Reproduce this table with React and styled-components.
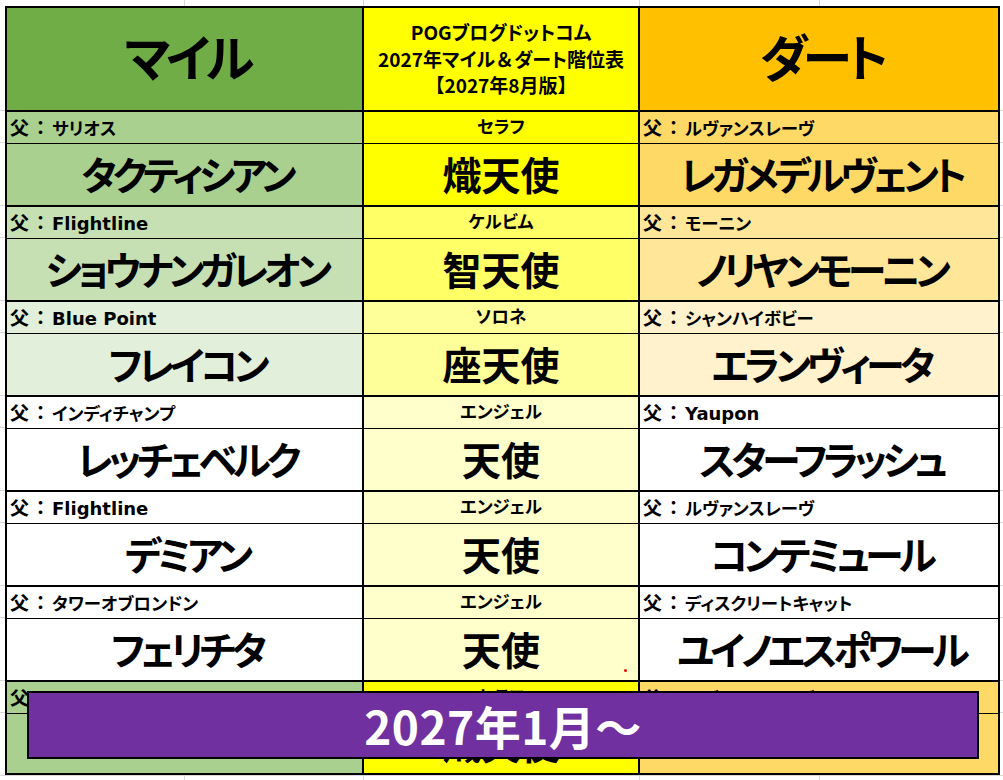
import React from "react";
import styled, { createGlobalStyle } from "styled-components";

const grid = "#d9d9d9";
const vLines = [184, 363, 639, 819];
const hLines = [110, 142, 205, 237, 300, 332, 395, 427, 490, 522, 585, 617, 680, 712, 775];
const bgImages = [
  ...vLines.map(() => `linear-gradient(${grid},${grid})`),
  ...hLines.map(() => `linear-gradient(${grid},${grid})`),
].join(",");
const bgPos = [
  ...vLines.map((x) => `${x}px 0`),
  ...hLines.map((y) => `0 ${y}px`),
].join(",");
const bgSize = [
  ...vLines.map(() => `1px 100%`),
  ...hLines.map(() => `100% 1px`),
].join(",");

const Global = createGlobalStyle`
  html, body { margin: 0; padding: 0; }
  body {
    width: 1003px;
    height: 780px;
    overflow: hidden;
    background-color: #fff;
    background-image: ${bgImages};
    background-position: ${bgPos};
    background-size: ${bgSize};
    background-repeat: no-repeat;
    font-family: "Noto Sans CJK JP", "Noto Sans", sans-serif;
    color: #000;
  }
`;

const Page = styled.div`
  padding: 6px 0 0 5px;
`;

const Sheet = styled.div`
  position: relative;
  width: 995px;
  box-sizing: border-box;
  border: 2px solid #000;
  display: grid;
  grid-template-columns: 357px 276px 358px;
  background: #fff;
`;

const Cell = styled.div`
  box-sizing: border-box;
  background: ${(p) => p.$bg};
  border-right: ${(p) => (p.$last ? "none" : "2px solid #000")};
  border-bottom: ${(p) => (p.$bottom === 0 ? "none" : `${p.$bottom}px solid #000`)};
  height: ${(p) => p.$h}px;
  display: flex;
  align-items: center;
  justify-content: ${(p) => (p.$center ? "center" : "flex-start")};
  padding-left: ${(p) => (p.$center ? 0 : 3)}px;
  overflow: hidden;
  white-space: nowrap;
  position: relative;
  font-feature-settings: "palt" 1;
`;

const HeadTitle = styled.span`
  font-size: 50px;
  font-weight: 700;
  letter-spacing: -5px;
  padding-left: 5px;
  line-height: 1;
  margin-top: -8px;
`;

const HeadCenter = styled.div`
  font-size: 19px;
  font-weight: 700;
  line-height: 26.5px;
  text-align: center;
  margin-top: 0;
`;

const FullWidth = styled.span`
  font-feature-settings: normal;
`;

const Sire = styled.span`
  font-family: "DejaVu Sans", "Noto Sans CJK JP", sans-serif;
  font-size: ${(p) => (p.$latin ? 18 : 17.4)}px;
  font-weight: 700;
  line-height: 1;
`;

const Prefix = styled.span`
  font-family: "Noto Sans CJK JP", sans-serif;
  font-feature-settings: normal;
  font-size: 19px;
  letter-spacing: 2px;
`;

const Name = styled.span`
  font-size: 39px;
  font-weight: 700;
  line-height: 1;
  margin-top: -2px;
  letter-spacing: ${(p) => (p.$kana ? "-4.5px" : "0")};
  padding-left: ${(p) => (p.$kana ? "4.5px" : "0")};
`;

const Dot = styled.span`
  position: absolute;
  right: 11px;
  bottom: 8px;
  width: 3px;
  height: 3px;
  border-radius: 50%;
  background: #e00;
`;

const Banner = styled.div`
  position: absolute;
  left: 20px;
  top: 683px;
  width: 952px;
  height: 68px;
  box-sizing: border-box;
  border: 2px solid #000;
  background: #7030a0;
  color: #fff;
  display: flex;
  align-items: center;
  justify-content: center;
  font-size: 46px;
  font-weight: 700;
  letter-spacing: 0.5px;
`;

const rows = [
  {
    bg: ["#A9D08E", "#FFFF00", "#FFD966"],
    l: ["サリオス", "タクティシアン"],
    m: ["セラフ", "熾天使"],
    r: ["ルヴァンスレーヴ", "レガメデルヴェント"],
  },
  {
    bg: ["#C6E0B4", "#FFFF66", "#FFE699"],
    l: ["Flightline", "ショウナンガレオン"],
    m: ["ケルビム", "智天使"],
    r: ["モーニン", "ノリヤンモーニン"],
  },
  {
    bg: ["#E2EFDA", "#FFFF99", "#FFF2CC"],
    l: ["Blue Point", "フレイコン"],
    m: ["ソロネ", "座天使"],
    r: ["シャンハイボビー", "エランヴィータ"],
  },
  {
    bg: ["#FFFFFF", "#FFFFCC", "#FFFFFF"],
    l: ["インディチャンプ", "レッチェベルク"],
    m: ["エンジェル", "天使"],
    r: ["Yaupon", "スターフラッシュ"],
  },
  {
    bg: ["#FFFFFF", "#FFFFCC", "#FFFFFF"],
    l: ["Flightline", "デミアン"],
    m: ["エンジェル", "天使"],
    r: ["ルヴァンスレーヴ", "コンテミュール"],
  },
  {
    bg: ["#FFFFFF", "#FFFFCC", "#FFFFFF"],
    l: ["タワーオブロンドン", "フェリチタ"],
    m: ["エンジェル", "天使"],
    r: ["ディスクリートキャット", "ユイノエスポワール"],
    dot: true,
  },
  {
    bg: ["#A9D08E", "#FFFF00", "#FFD966"],
    l: ["サリオス", ""],
    m: ["セラフ", "熾天使"],
    r: ["ルヴァンスレーヴ", ""],
    last: true,
  },
];

const isLatin = (s) => /^[A-Za-z ]+$/.test(s);

export default function App() {
  return (
    <>
      <Global />
      <Page>
        <Sheet>
          <Cell $bg="#70AD47" $h={104} $bottom={2} $center>
            <HeadTitle>マイル</HeadTitle>
          </Cell>
          <Cell $bg="#FFFF00" $h={104} $bottom={2} $center>
            <HeadCenter>
              POGブログドットコム
              <br />
              2027年マイル<FullWidth>＆</FullWidth>ダート階位表
              <br />
              <FullWidth>【</FullWidth>2027年8月版<FullWidth>】</FullWidth>
            </HeadCenter>
          </Cell>
          <Cell $bg="#FFC000" $h={104} $bottom={2} $center $last>
            <HeadTitle>ダート</HeadTitle>
          </Cell>
          {rows.map((row, i) => {
            const nh = row.last ? 59 : 63;
            const nb = row.last ? 0 : 2;
            return (
              <React.Fragment key={i}>
                <Cell $bg={row.bg[0]} $h={32} $bottom={1}>
                  <Sire $latin={isLatin(row.l[0])}>
                    <Prefix>父：</Prefix>
                    {row.l[0]}
                  </Sire>
                </Cell>
                <Cell $bg={row.bg[1]} $h={32} $bottom={1} $center>
                  <Sire>{row.m[0]}</Sire>
                </Cell>
                <Cell $bg={row.bg[2]} $h={32} $bottom={1} $last>
                  <Sire $latin={isLatin(row.r[0])}>
                    <Prefix>父：</Prefix>
                    {row.r[0]}
                  </Sire>
                </Cell>
                <Cell $bg={row.bg[0]} $h={nh} $bottom={nb} $center>
                  <Name $kana>{row.l[1]}</Name>
                </Cell>
                <Cell $bg={row.bg[1]} $h={nh} $bottom={nb} $center>
                  <Name>{row.m[1]}</Name>
                  {row.dot && <Dot />}
                </Cell>
                <Cell $bg={row.bg[2]} $h={nh} $bottom={nb} $center $last>
                  <Name $kana>{row.r[1]}</Name>
                </Cell>
              </React.Fragment>
            );
          })}
          <Banner>2027年1月～</Banner>
        </Sheet>
      </Page>
    </>
  );
}
